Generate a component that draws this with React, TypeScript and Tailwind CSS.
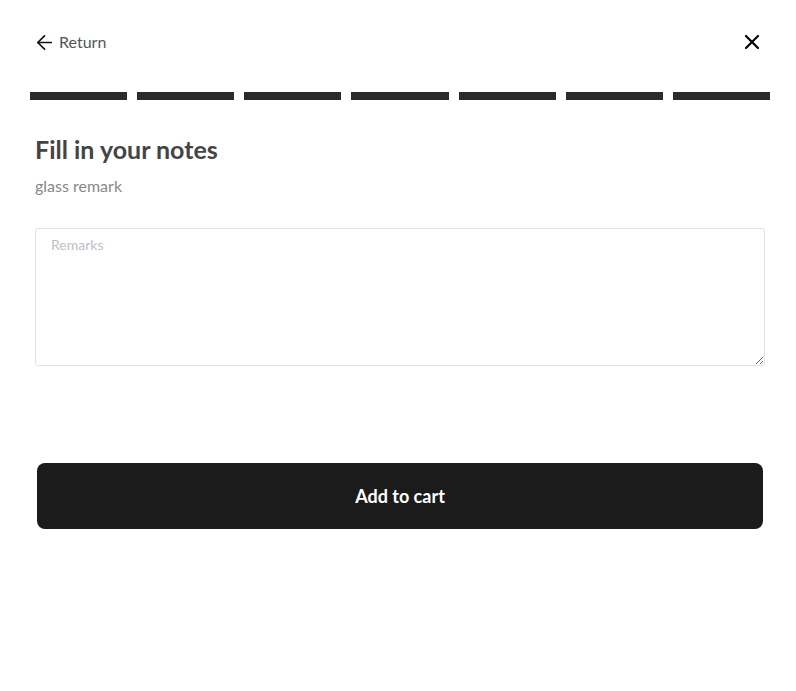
import { ArrowLeft, X } from 'lucide-react'

const STEPS = [1, 2, 3, 4, 5, 6, 7]

export default function App() {
  return (
    <main className="min-h-screen bg-white" style={{ fontFamily: 'Lato, "Noto Sans", sans-serif' }}>
      <div className="flex justify-between items-start pl-[33px] pr-[32px] pt-[31px] h-[84px]">
        <button className="flex items-center gap-[3px] text-[16px] text-[#555] h-[22px]">
          <ArrowLeft size={23} strokeWidth={1.8} className="text-[#111]" />
          Return
        </button>
        <button className="h-[22px] flex items-center">
          <X size={24} strokeWidth={2.2} className="text-black" />
        </button>
      </div>

      <div className="flex gap-[10px] pl-[30px] pr-[26px] mt-[8px]">
        {STEPS.map(s => (
          <div key={s} className="flex-1 h-[8px] bg-[#2b2b2b]" />
        ))}
      </div>

      <div className="pl-[35px] pr-[31px] pt-[33px]">
        <h1 className="text-[25px] font-bold text-[#444] leading-[32px]">Fill in your notes</h1>
        <p className="text-[16px] text-[#888] mt-[10px] leading-[22px]">glass remark</p>

        <textarea
          placeholder="Remarks"
          className="mt-[31px] w-full h-[138px] border border-[#e2e2e6] rounded-[3px] px-[15px] py-[5px] text-[14px] leading-[22px] placeholder:text-[#c0c0c8] outline-none block"
        />

        <button className="mt-[97px] mx-[2px] w-[726px] h-[66px] rounded-[8px] bg-[#1b1b1b] text-white text-[18px] font-bold">
          Add to cart
        </button>
      </div>
    </main>
  )
}
